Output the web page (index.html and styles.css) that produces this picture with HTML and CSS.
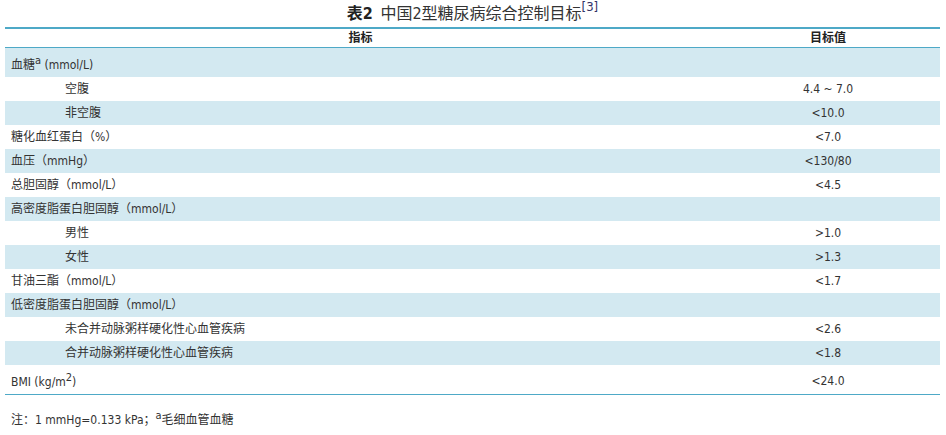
FILE: index.html
```html
<!DOCTYPE html>
<html lang="zh">
<head>
<meta charset="utf-8">
<title>表2 中国2型糖尿病综合控制目标</title>
<link rel="stylesheet" href="styles.css">
</head>
<body>
<div class="wrap">
  <div class="caption"><b class="label">表2</b> 中国2型糖尿病综合控制目标<sup class="ref">[3]</sup></div>
  <table class="targets">
    <thead>
      <tr><th class="c1">指标</th><th class="c2">目标值</th></tr>
    </thead>
    <tbody>
      <tr class="alt tall"><td>血糖<sup class="s">a</sup> (mmol/L)</td><td class="v"></td></tr>
      <tr><td class="sub">空腹</td><td class="v">4.4 ~ 7.0</td></tr>
      <tr class="alt"><td class="sub">非空腹</td><td class="v">&lt;10.0</td></tr>
      <tr><td>糖化血红蛋白（%）</td><td class="v">&lt;7.0</td></tr>
      <tr class="alt"><td>血压（mmHg）</td><td class="v">&lt;130/80</td></tr>
      <tr><td>总胆固醇（mmol/L）</td><td class="v">&lt;4.5</td></tr>
      <tr class="alt"><td>高密度脂蛋白胆固醇（mmol/L）</td><td class="v"></td></tr>
      <tr><td class="sub">男性</td><td class="v">&gt;1.0</td></tr>
      <tr class="alt"><td class="sub">女性</td><td class="v">&gt;1.3</td></tr>
      <tr><td>甘油三酯（mmol/L）</td><td class="v">&lt;1.7</td></tr>
      <tr class="alt"><td>低密度脂蛋白胆固醇（mmol/L）</td><td class="v"></td></tr>
      <tr><td class="sub">未合并动脉粥样硬化性心血管疾病</td><td class="v">&lt;2.6</td></tr>
      <tr class="alt"><td class="sub">合并动脉粥样硬化性心血管疾病</td><td class="v">&lt;1.8</td></tr>
      <tr class="tall last"><td>BMI (kg/m<sup class="s">2</sup>)</td><td class="v">&lt;24.0</td></tr>
    </tbody>
  </table>
  <p class="note">注：1 mmHg=0.133 kPa；<sup class="s">a</sup>毛细血管血糖</p>
</div>
</body>
</html>
```

FILE: styles.css
```css
html, body {
  margin: 0;
  padding: 0;
  background: #ffffff;
}

body {
  font-family: "DejaVu Sans Condensed", "DejaVu Sans", "Noto Sans CJK SC", sans-serif;
  color: #333333;
}

.wrap {
  width: 935px;
  padding-left: 5px;
}

.caption {
  padding-top: 3px;
  height: 24px;
  line-height: 22px;
  text-align: center;
  font-size: 16px;
  color: #333333;
}

.caption .label {
  font-weight: bold;
  color: #222222;
  margin-right: 3px;
}

.caption .ref {
  font-size: 13px;
  vertical-align: top;
  line-height: 12px;
  position: relative;
  top: -2px;
  color: #333366;
}

.targets {
  width: 935px;
  border-collapse: collapse;
  font-size: 12px;
  border-top: 2px solid #4ea9c7;
}

.targets th {
  height: 18px;
  padding: 0;
  font-weight: bold;
  color: #222222;
  border-bottom: 1px solid #4ea9c7;
  line-height: 18px;
  text-align: center;
}

.targets th.c2 {
  width: 224px;
}

.targets td {
  height: 24px;
  padding: 0 0 0 6px;
  line-height: 16px;
  vertical-align: middle;
}

.targets td.sub {
  padding-left: 60px;
}

.targets td.v {
  text-align: center;
  padding-left: 0;
}

.targets tr.alt td {
  background: #d3e9f1;
}

.targets tr.tall td {
  height: 24px;
  padding-top: 5px;
}

.targets tr.tall td.v {
  padding-top: 3px;
}

.targets tr.last td {
  border-bottom: 1px solid #4ea9c7;
}

.s {
  font-size: 11px;
  line-height: 0;
  vertical-align: 5px;
}

.note {
  margin: 17px 0 0 6px;
  font-size: 12px;
  line-height: 16px;
}
```
